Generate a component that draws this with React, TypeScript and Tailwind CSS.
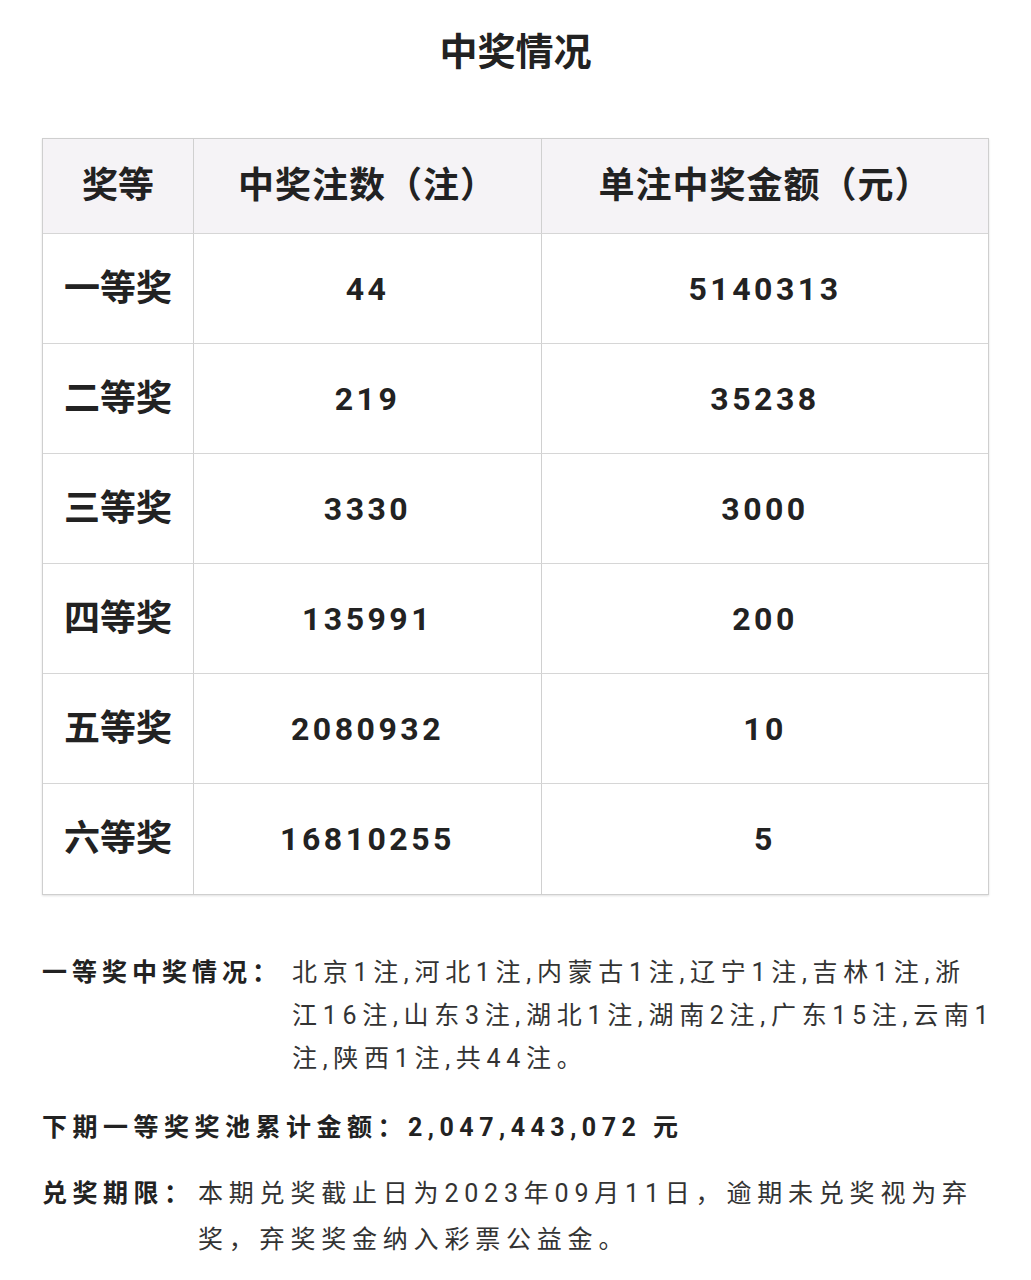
import React from "react";

const rows: [string, string, string][] = [
  ["一等奖", "44", "5140313"],
  ["二等奖", "219", "35238"],
  ["三等奖", "3330", "3000"],
  ["四等奖", "135991", "200"],
  ["五等奖", "2080932", "10"],
  ["六等奖", "16810255", "5"],
];

export default function App() {
  return (
    <div
      className="w-[1031px] min-h-[1280px] bg-white text-[#222]"
      style={{ fontFamily: "Roboto, 'Noto Sans CJK SC', 'Noto Sans', sans-serif" }}
    >
      <div className="pt-[24px] text-center text-[38px] leading-[56px] font-bold text-[#222]">
        中奖情况
      </div>

      <div className="mt-[58px] ml-[42px] w-[947px] border border-[#cfcfcf] shadow-[0_1px_2px_rgba(0,0,0,0.12)]">
        <div className="grid grid-cols-[151px_348px_1fr] h-[95px] bg-[#f5f3f6] border-b border-[#d6d6d6]">
          <div className="flex items-center justify-center border-r border-[#d0d0d0] text-[36px] font-bold">
            奖等
          </div>
          <div className="flex items-center justify-center border-r border-[#d0d0d0] text-[36px] font-bold tracking-[1px]">
            中奖注数（注）
          </div>
          <div className="flex items-center justify-center text-[36px] font-bold tracking-[1px]">
            单注中奖金额（元）
          </div>
        </div>
        {rows.map((r, i) => (
          <div
            key={r[0]}
            className={
              "grid grid-cols-[151px_348px_1fr] h-[110px] bg-white" +
              (i < rows.length - 1 ? " border-b border-[#d6d6d6]" : "")
            }
          >
            <div className="flex items-center justify-center border-r border-[#d0d0d0] text-[36px] font-bold">
              {r[0]}
            </div>
            <div className="flex items-center justify-center border-r border-[#d0d0d0] text-[32px] font-bold tracking-[3.5px]">
              {r[1]}
            </div>
            <div className="flex items-center justify-center text-[32px] font-bold tracking-[3.5px]">
              {r[2]}
            </div>
          </div>
        ))}
      </div>

      <div className="ml-[42px] mt-[56px] flex">
        <div className="w-[250px] shrink-0 text-[25px] leading-[43px] font-bold tracking-[5px] whitespace-nowrap">
          一等奖中奖情况：
        </div>
        <div className="text-[25px] leading-[43px] text-[#333] tracking-[5.7px] whitespace-nowrap">
          <div>北京1注,河北1注,内蒙古1注,辽宁1注,吉林1注,浙</div>
          <div>江16注,山东3注,湖北1注,湖南2注,广东15注,云南1</div>
          <div>注,陕西1注,共44注。</div>
        </div>
      </div>

      <div className="ml-[42px] mt-[26px] text-[25px] leading-[43px] font-bold tracking-[5.5px] whitespace-nowrap">
        下期一等奖奖池累计金额：2,047,443,072 元
      </div>

      <div className="ml-[42px] mt-[22px] flex">
        <div className="w-[156px] shrink-0 text-[25px] leading-[46px] font-bold tracking-[5.5px] whitespace-nowrap">
          兑奖期限：
        </div>
        <div className="text-[25px] leading-[46px] text-[#333] tracking-[5.8px] whitespace-nowrap">
          <div>本期兑奖截止日为2023年09月11日，逾期未兑奖视为弃</div>
          <div>奖，弃奖奖金纳入彩票公益金。</div>
        </div>
      </div>
    </div>
  );
}
